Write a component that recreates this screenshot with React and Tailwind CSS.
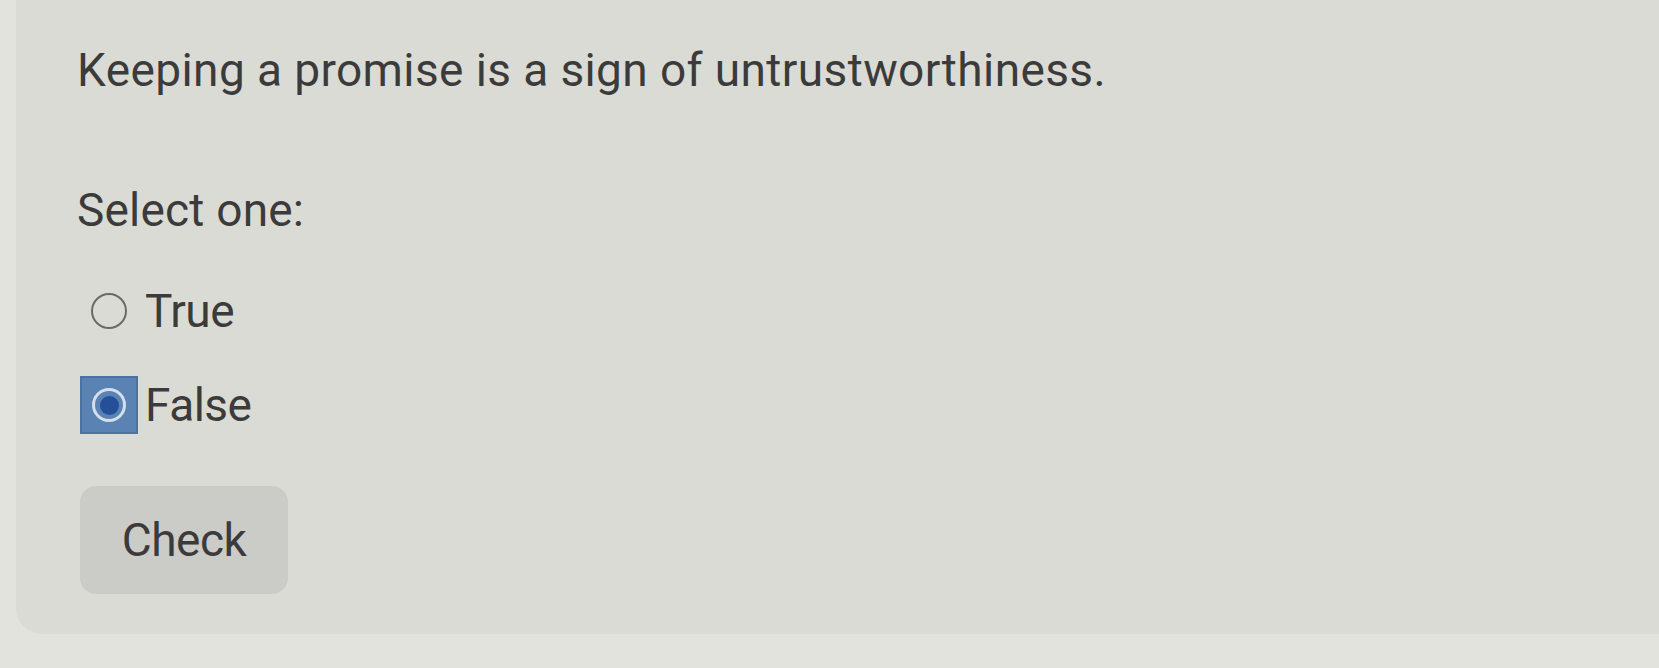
import { useState } from "react"

export default function App() {
  const [answer, setAnswer] = useState("false")

  const options = [
    { value: "true", label: "True" },
    { value: "false", label: "False" },
  ]

  return (
    <div className="w-[1659px] h-[668px] bg-[#e3e3de] overflow-hidden" style={{ fontFamily: "Roboto, 'Liberation Sans', sans-serif" }}>
      <div className="ml-[16px] h-[634px] bg-[#dbdbd6] rounded-bl-[26px] pl-[61px] pt-[43px] text-[#3b3b3b]">
        {/* Question */}
        <p className="text-[46px] leading-[54px] tracking-[0.4px]">Keeping a promise is a sign of untrustworthiness.</p>

        <p className="mt-[86px] text-[46px] leading-[54px] tracking-[0.2px]">Select one:</p>

        <div className="mt-[45px] ml-[3px] flex flex-col gap-[36px]">
          {options.map((opt) => {
            const selected = answer === opt.value
            return (
              <label key={opt.value} className="flex items-center cursor-pointer" onClick={() => setAnswer(opt.value)}>
                <span className={`w-[58px] h-[58px] flex items-center justify-center ${selected ? "bg-[#5a83b4] border-[2px] border-[#4d73a3]" : ""}`}>
                  {selected ? (
                    <span className="w-[34px] h-[34px] rounded-full border-[3px] border-[#d5dfec] bg-[#5a83b4] flex items-center justify-center">
                      <span className="w-[19px] h-[19px] rounded-full bg-[#24509a]" />
                    </span>
                  ) : (
                    <span className="w-[36px] h-[36px] rounded-full border-[2.5px] border-[#6a6a6a] bg-[#dbdbd6]" />
                  )}
                </span>
                <span className="ml-[7px] text-[46px] leading-[54px] tracking-[-0.5px]">{opt.label}</span>
              </label>
            )
          })}
        </div>

        <button className="mt-[52px] ml-[3px] w-[208px] h-[108px] rounded-[16px] bg-[#cbcbc7] text-[46px] text-[#3b3b3b] tracking-[-0.5px]">
          Check
        </button>
      </div>
    </div>
  )
}
